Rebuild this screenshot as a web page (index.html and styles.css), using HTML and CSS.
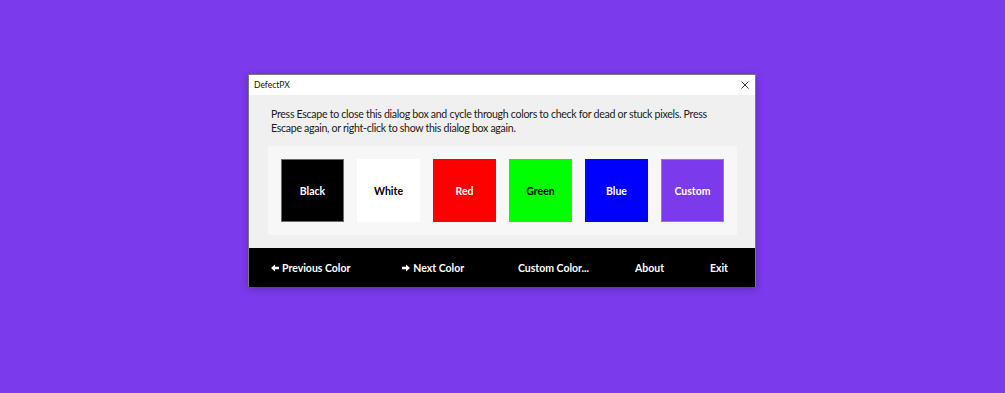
FILE: index.html
```html
<!DOCTYPE html>
<html>
<head>
<meta charset="utf-8">
<link rel="stylesheet" href="styles.css">
</head>
<body>
<div class="window">
  <div class="titlebar">
    <span class="title">DefectPX</span>
    <svg class="close" width="8" height="8" viewBox="0 0 8 8"><path d="M0.5 0.5L7.5 7.5M7.5 0.5L0.5 7.5" stroke="#333" stroke-width="1" fill="none"/></svg>
  </div>
  <div class="content">
    <p class="msg">Press Escape to close this dialog box and cycle through colors to check for dead or stuck pixels. Press<br>Escape again, or right-click to show this dialog box again.</p>
    <div class="panel">
      <div class="swatch black">Black</div>
      <div class="swatch white">White</div>
      <div class="swatch red">Red</div>
      <div class="swatch green">Green</div>
      <div class="swatch blue">Blue</div>
      <div class="swatch custom">Custom</div>
    </div>
  </div>
  <div class="footer">
    <span class="fbtn"><svg width="8" height="8" viewBox="0 0 8 8"><path d="M0 4L4 0.5V2.8H8V5.2H4V7.5Z" fill="#fff"/></svg>Previous Color</span>
    <span class="fbtn next"><svg width="8" height="8" viewBox="0 0 8 8"><path d="M8 4L4 0.5V2.8H0V5.2H4V7.5Z" fill="#fff"/></svg>Next Color</span>
    <span class="fbtn custom-color">Custom Color...</span>
    <span class="fbtn">About</span>
    <span class="fbtn">Exit</span>
  </div>
</div>
</body>
</html>
```
FILE: styles.css
```css
html, body { margin: 0; padding: 0; }
body {
  width: 1005px;
  height: 393px;
  background: #7c3aed;
  display: flex;
  flex-direction: column;
  align-items: center;
  padding-top: 74px;
  box-sizing: border-box;
  font-family: Lato, "Open Sans", sans-serif;
}
.window {
  width: 506px;
  border: 1px solid #7a7a7a;
  border-bottom: none;
  background: #f0f0f0;
  box-shadow: 0 2px 8px rgba(0,0,0,0.25);
  margin-left: -1px;
}
.titlebar {
  height: 20px;
  background: #fff;
  display: flex;
  align-items: center;
  justify-content: space-between;
  padding: 0 6px 0 5px;
}
.title {
  font-size: 8.5px;
  color: #111;
}
.close { display: block; }
.content {
  padding: 12px 18px 13px 19px;
}
.msg {
  margin: 0 0 11px 3px;
  font-size: 10.6px;
  letter-spacing: -0.3px;
  line-height: 14px;
  color: #1a1a1a;
  white-space: nowrap;
}
.panel {
  background: #f7f7f7;
  padding: 13px;
  display: flex;
  gap: 13px;
}
.swatch {
  width: 63px;
  height: 63px;
  display: flex;
  align-items: center;
  justify-content: center;
  font-weight: 700;
  font-size: 10.5px;
  box-sizing: border-box;
}
.black { background: #000; color: #fff; border: 1px solid #6a6a6a; }
.white { background: #fff; color: #000; }
.red { background: #f00; color: #fff; }
.green { background: #0f0; color: #000; }
.blue { background: #00f; color: #fff; }
.custom { background: #7c3aed; color: #fff; border: 1px solid #9b6ff5; }
.footer {
  height: 39px;
  background: #000;
  display: flex;
  align-items: center;
  justify-content: space-between;
  padding: 0 27px 0 22px;
}
.fbtn {
  color: #fff;
  font-weight: 700;
  font-size: 10.5px;
  display: flex;
  align-items: center;
  gap: 3px;
}
.next { margin-left: 6px; }
.custom-color { margin-left: 8px; }
.fbtn svg { display: block; }
```
